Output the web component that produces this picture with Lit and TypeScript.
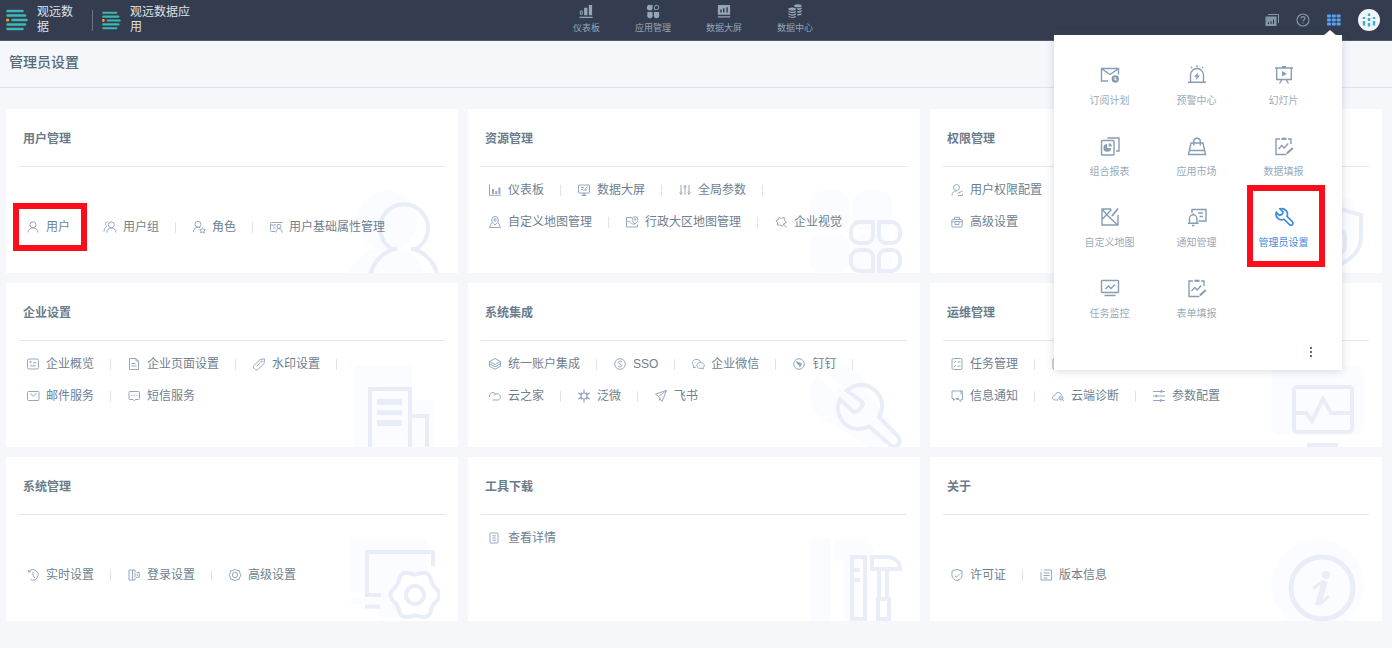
import { LitElement, html, css, svg, nothing } from "lit";
import { customElement, property } from "lit/decorators.js";

/* ---------- small line icons, 14 x 14 ---------- */
const small: Record<string, unknown> = {
  user: svg`<circle cx="7" cy="4.8" r="3"/><path d="M2 12.5c0-3 2.2-4.6 5-4.6s5 1.600 5 4.600"/>`,
  group: svg`<circle cx="8.300" cy="4.800" r="3"/><path d="M3.800 12.500c0-3 2-4.600 4.500-4.600s4.700 1.600 4.700 4.600M4.600 1.800C2.400 2 2 5 3.700 6.700 2 7.500 1 9.300 1 11.500"/>`,
  role: svg`<circle cx="6" cy="4.300" r="3"/><path d="M1.500 12c0-3 1.800-4.700 4.500-4.700 1 0 1.600.2 2.200.5"/><path d="m10.500 7.800.9 1.700 1.900.3-1.400 1.300.3 1.900-1.700-.9-1.700.9.3-1.900-1.400-1.300 1.900-.3z"/>`,
  attrs: svg`<path d="M6 11.500H2.500a1 1 0 0 1-1-1v-7a1 1 0 0 1 1-1h11M1.500 5H7M4 8h2.500"/><circle cx="10" cy="6.300" r="2"/><path d="M6.800 12.500c.2-2.500 1.400-4 3.200-4s3 1.500 3.200 4"/>`,
  bars: svg`<path d="M1.500 1.500v10.800h11.500"/><path stroke-width="2" d="M5 6v5M8.200 8v3M11.400 4.500V11"/>`,
  screen: svg`<rect x="1.500" y="2" width="11" height="8" rx=".5"/><path d="M4 4.500h3M4 6.500h2M6.500 8l4-4.500M9 8V6M4.500 12.500h5M7 10v2.500M5.500 11.300h3"/>`,
  sliders: svg`<path d="M3 2v6.500M7 5v7M11 2v6.500M3 11v1M7 2v1M11 11v1"/><circle cx="3" cy="9.700" r="1"/><circle cx="7" cy="3.900" r="1"/><circle cx="11" cy="9.700" r="1"/>`,
  mapPin: svg`<path d="M7 10C4.500 8 3.700 6.500 3.700 4.800a3.300 3.300 0 0 1 6.600 0C10.300 6.500 9.500 8 7 10z"/><circle cx="7" cy="4.800" r="1.200"/><path d="M3.700 7.500 1.500 12.500h11l-2.200-5"/>`,
  region: svg`<path d="M7 2.500H1.500v9.500h11V9.500M1.500 5.500c2 2 3 0 4 2s3 1.500 4.500 1.500"/><path d="M10 9C8 7.300 7.300 6.200 7.300 4.500a2.800 2.800 0 0 1 5.600 0C12.900 6.200 12 7.300 10 9z"/><circle cx="10.100" cy="4.500" r=".8"/>`,
  visual: svg`<path d="M5 2.500c2 1.300 3 1 5-.5l.5 3.500 2 2-2.500 1-1.500 2.500-2-1H3.500V7.500L2 5.500l2-.5zM9.500 9l3 3.500"/>`,
  permit: svg`<circle cx="6.500" cy="4.500" r="3"/><path d="M2 12.500c0-3 2-4.600 4.500-4.600M7.500 10.500l5-2.500M8 12.500h4.500V11"/>`,
  lockbox: svg`<rect x="1.800" y="4.500" width="10.400" height="7.500" rx="1"/><path d="M4.500 4.500V2.300h5v2.200M1.800 6.700h3M9.200 6.700h3"/><rect x="5" y="6.500" width="4" height="3"/>`,
  overview: svg`<rect x="1.500" y="2" width="11" height="10" rx="1.500"/><circle cx="4.500" cy="5" r=".8"/><path d="M4 8.800h6M7 5.800h3.500"/>`,
  page: svg`<path d="M9 1.500H2.500v11h9V4zM9 1.500V4h2.500M4.500 6.500h4M4.500 9h5"/>`,
  tag: svg`<path d="m2 8.500 6-6 4.500-.5-.5 4.500-6 6c-1 1-2.500.500-3.400-.500S1 9.500 2 8.500zM4.500 9.500l4-4"/><circle cx="9.700" cy="4.500" r=".6"/>`,
  mail: svg`<rect x="1.500" y="2.500" width="11.500" height="9" rx=".8"/><path d="m4 4.500 3.200 2.700L10.500 4.500"/>`,
  sms: svg`<path d="M3 2.500h8.500a1 1 0 0 1 1 1v6a1 1 0 0 1-1 1H8.500l-1.200 1.300L6 10.500H3a1 1 0 0 1-1-1v-6a1 1 0 0 1 1-1z"/><path d="M4.300 6.500h1M6.800 6.500h1M9.300 6.500h1"/>`,
  layers: svg`<path d="m7 1.500 5.500 3L7 7.500l-5.500-3zM1.500 6.800 7 9.800l5.500-3M1.500 9.200 7 12.300l5.500-3.100M1.500 4.500v5M12.500 4.500v5"/>`,
  sso: svg`<circle cx="7" cy="7" r="5.300"/><path d="M9 4.800C8 3.800 5.300 4 5.300 5.500S8.800 6.700 8.800 8.400 6 10.200 5 9.200"/>`,
  wechat: svg`<path d="M5 9.800 2.500 11l.4-2C.5 7 1 3 5 2.500c3-.300 4.500 1.300 4.800 2.800"/><path d="M9.500 5.500c2.200 0 3.800 1.300 3.800 3 0 1-.5 1.800-1.200 2.300l.2 1.200-1.300-.700c-3 .600-5.200-.8-5.200-2.800 0-1.700 1.500-3 3.700-3z"/><path d="M4 5.500h.6M8.300 8.200h.6M10.700 8.200h.6"/>`,
  ding: svg`<circle cx="7" cy="7" r="5.300"/><path d="m4 4 6 2.300c-.2 1-.8 1.700-1 2.200h.8L7.200 11l.5-1.800H6.600l.3-.9C5 7.500 4.300 6 4 4z" fill="currentColor" stroke="none"/>`,
  cloud: svg`<path d="M1.500 8C1.300 4.800 3.500 3.500 5 3.600c1.700.1 2.200 1.200 3 2.200M6 6.600c.8-1.900 3.500-2.600 5.300-.9 2 1.900 1 5-1.500 5.300H4.500"/>`,
  flower: svg`<circle cx="7" cy="7" r="3"/><path stroke-width="1.300" d="M7 4V.5M7 10v3.500M4.400 5.500 1.300 3.700M9.600 8.500l3.100 1.800M4.400 8.500l-3.100 1.800M9.600 5.500l3.100-1.800M4.500 3.500v2h-2M9.500 3.500v2h2M4.500 10.500v-2h-2M9.500 10.500v-2h2"/>`,
  plane: svg`<path d="M12.500 1.500 1.500 5l3 2.500 8-6-4.500 11L4.500 7.500M6 9l-.8 2.500"/>`,
  tasks: svg`<rect x="2" y="1.500" width="10" height="11" rx="1.500"/><path d="m3.800 4.800.8.800 1.200-1.500M7.500 5h3M3.800 9l.8.800L5.800 8.300M7.500 9.200h3M5 1.500v-.5M9 1.500v-.5"/>`,
  chat: svg`<path d="M3.500 9.500H2V2h9v3.500"/><path d="M10 2h2.500v8.500H11v2L8.800 10.500H6.500M3.500 9.500v2l2-2H9"/>`,
  cloudDiag: svg`<path d="M7 11H4C.5 10.500.8 6.800 3.800 6.500 4.500 3 9.500 2.500 10.500 6"/><circle cx="10" cy="9" r="2"/><path d="m11.300 10.500 1.500 1.500M9 9h2"/>`,
  params: svg`<path d="M1 2.500h12M1 7h12M1 11.500h12"/><path stroke-width="2.600" d="M8.500 2.500h1.800M3.500 7h1.800M7.800 11.500h1.800"/>`,
  history: svg`<path d="M3 3.300A5.200 5.200 0 1 1 4.500 11.500M2.200 1.800l.6 2.200 2.300-.3M7 4v3.500L9 10"/>`,
  login: svg`<path d="M8 4V2H2v10h6v-2M5.500 2v10M8 4.500v5M9.500 4.500h2.800v4.800L9 9.300M10.300 6v2"/>`,
  gear: svg`<path d="M7 1.200 9 2.500l2.300.2.500 2.200L13 7l-1.200 2.100-.5 2.200-2.300.2L7 12.800 5 11.500l-2.300-.2-.5-2.200L1 7l1.200-2.100.5-2.200L5 2.500z"/><ellipse cx="7" cy="7" rx="2.600" ry="2.800"/>`,
  list: svg`<rect x="2" y="2" width="8" height="10" rx=".8"/><path d="M4.300 4.800h3.500M4.300 7h3.500M4.300 9.300h3.500"/>`,
  shield: svg`<path d="M7 1.300 12 3v4.500c0 2.500-2.300 4.200-5 5.200-2.700-1-5-2.700-5-5.200V3z"/><path d="m4.700 7.500 1.800 1.700 3-3"/>`,
  version: svg`<path d="M2 2h1M5 2h7.500v10H2V4M4.500 5h6M4.500 7.500h6M4.500 10h4"/>`,
};

/* ---------- launcher icons, 20 x 20 ---------- */
const large: Record<string, unknown> = {
  subscribe: svg`<path d="M18.500 9.500V3.500h-17v12.500H8M2 4l8 5.500L18 4"/><circle cx="15.300" cy="14" r="3.700" fill="currentColor" stroke="none"/><path stroke="#fff" stroke-width="1.200" d="M15 12v2.300l1.500 1"/>`,
  alarm: svg`<path d="M1 17.300h18M3.500 17V10a6.500 6.500 0 0 1 13 0v7M10 .3v2M4 1.800l1 1.400M16 1.800l-1 1.400"/><path fill="currentColor" stroke="none" d="m11 7.500-4 4.300h2.400L9 15l4-4.500h-2.500z"/>`,
  slides: svg`<path d="M1 3h18M2.700 3v11.500h14.600V3M8 14.500 5.500 18.500M12 14.500l2.500 4M8 1.800h4"/><path fill="currentColor" stroke="none" d="m8 6 5 2.800L8 11.500z"/>`,
  report: svg`<path d="M7.500 2h11.500v13h-3"/><rect x="1.500" y="4.500" width="12.500" height="14.500" rx=".8"/><path fill="currentColor" stroke="none" d="M7.200 8v4h4a3.900 3.900 0 1 1-4-4z"/><path fill="currentColor" stroke="none" d="M8.700 7.200a3.400 3.400 0 0 1 3.200 3.200H8.700z"/>`,
  market: svg`<path d="M4 7h12l2.500 11.500h-17zM1.800 14.500h16.400M6.700 9.500V5.500a3.300 3.300 0 0 1 6.600 0v4"/>`,
  fill: svg`<path d="M6 3H2v15.500h10.500M14 3h3v5"/><path stroke-width="2.200" d="M7.500 2.800h5"/><path d="m4.500 13 3.300-3.500 2.400 2.500 4-4.500"/><path stroke-width="2" d="m12.800 17.500 6-5.500"/>`,
  map: svg`<path d="M11 2H2v16h16V8M2 12.500 11.500 2.500M7 8l10.500 10M2.500 2.500 7 8"/><path stroke-width="1.800" d="m12 9 6-7.500"/>`,
  notice: svg`<path d="M5 6V2.500h14V14h-7.500M11 6h5M12.500 9.500H16"/><path d="M2.500 16v-4.500a3.700 3.700 0 0 1 7.400 0V16M.8 16.300h10.800M6.200 7.500v-1M5 18.500h2.500"/>`,
  wrench: svg`<path d="M6 1.900a5.600 5.600 0 0 1 7 7.500l5.300 5.300c1.700 2-.8 4.600-2.800 2.900L10 12.200A5.600 5.600 0 0 1 2.300 5.300L5.200 8.200l2.300-.5L8.700 6.500 9 4.800z"/>`,
  monitor: svg`<rect x="1.500" y="2.500" width="17" height="12" rx=".8"/><path d="m5.500 11 3-3 2.500 2.500L15 6.500M4.500 17.500h11"/>`,
};

/* wavy outline of the cog in the corner artwork */
const cogPath = (cx: number, cy: number, r: number, depth: number): string => {
  const pts: string[] = [];
  for (let a = 0; a < 360; a += 5) {
    const t = (a * Math.PI) / 180;
    const d = r + depth * Math.cos(6 * t);
    pts.push(`${(cx + d * Math.cos(t)).toFixed(1)} ${(cy + d * Math.sin(t)).toFixed(1)}`);
  }
  return `M${pts.join("L")}Z`;
};

/* ---------- corner artwork, 92 x 82: "p" is the pale shade, "b" a solid part ---------- */
const art: Record<string, unknown> = {
  user: svg`<circle class="p" cx="39" cy="30" r="30"/><circle class="p" cx="39" cy="98" r="42"/>
    <path d="M45 58.500a24 24 0 1 1 22 0M22.500 83a34 34 0 0 1 22.500-24.500M67 58.500A34 34 0 0 1 89 83M45 58.500a34 34 0 0 1 4-1M67 58.500a34 34 0 0 0-4-1"/>`,
  apps: svg`<rect class="p" width="39" height="39" rx="12"/><rect class="p" x="43" width="39" height="39" rx="12"/><rect class="p" y="43" width="39" height="39" rx="12"/><rect class="p" x="43" y="43" width="39" height="39" rx="12"/>
    <path d="M50 31h13v14a7 7 0 0 1-7 7h-7a8 8 0 0 1-8-8v-4a9 9 0 0 1 9-9zM82 31H69v14a7 7 0 0 0 7 7h6a8 8 0 0 0 8-8v-4a9 9 0 0 0-8-9zM50 80h13V66a7 7 0 0 0-7-7h-7a8 8 0 0 0-8 8v4a9 9 0 0 0 9 9zM82 80H69V66a7 7 0 0 1 7-7h6a8 8 0 0 1 8 8v4a9 9 0 0 1-8 9z"/>`,
  shield: svg`<path class="p" d="M6 12 45 0l39 10v34c0 18-16 30-39 38C22 74 6 62 6 44z"/><path d="M29 24 59 15l30 9v22c0 15-12 25-30 31-18-6-30-16-30-31z"/><path d="M68 40a5 5 0 0 1 5 5v11a5 5 0 0 1-5 5"/>`,
  building: svg`<path class="p" d="M6 0h58v35h22v47H6z"/><path d="M22 82V24h40v58M62 51h17v31"/><path class="b" d="M29 34h25v6H29zM29 45h25v5H29zM29 55h25v6H29z"/>`,
  wrench: svg`<circle class="p" cx="29" cy="30" r="29"/><path class="p" d="M12 53 52 20l34 46-14 16H60z"/><path class="cut" d="M8 5l19 19"/>
    <path d="M37 25.500A21 21 0 0 1 69 52l19 19.500c5 6-2 13-8 8L59 61.500A21 21 0 0 1 30 34l12 11.500c2 2 4 2 6 0l3.500-3.500c2-2 1.500-4 0-5.500z"/>`,
  monitor: svg`<rect class="p" width="92" height="70" rx="8"/><rect x="22" y="22" width="58" height="45" rx="3"/><path d="M22 48h12l6 8 11-22 8 14h21"/><path class="b" d="M35 78h31v4H35z"/>`,
  cog: svg`<path class="p" d="M3 0h76v53H3zM3 59h20v6H3z"/><path class="p" d="${cogPath(46, 56, 24, 2)}"/><path d="M33 56H19V13h66v14M17 67.500h15"/><path class="w" d="${cogPath(67, 56, 22.5, 2)}"/><circle cx="67" cy="56" r="9"/>`,
  tools: svg`<path class="p" d="M0 0h21v82H0zM25 0h22c12 0 19 10 19 22H50v60H34V22h-9z"/><path d="M42 18h13v62H42zM42 31h8M42 41h8M62 18h14c9 0 14 5 14 12H62zM69 30v28M77 30v28M68 60h11v20H68z"/>`,
  info: svg`<circle class="p" cx="46" cy="46" r="46"/><circle stroke-width="5" class="ring" cx="50" cy="49" r="31"/><circle class="b" cx="54" cy="36" r="4"/><path class="thin" d="M42.500 49c3-3.500 7-5.500 9-5M44 64.500c3 1.500 8-2 12-7"/><path class="thick" d="M53 42l-6.500 22"/>`,
};

type Entry = { icon: string; label: string; marked?: boolean };
type Section = { title: string; art: string; centred?: boolean; rows: Entry[][] };
const e = (icon: string, label: string, marked = false): Entry => ({ icon, label, marked });

const sections: Section[] = [
  { title: "用户管理", art: "user", centred: true, rows: [[e("user", "用户", true), e("group", "用户组"), e("role", "角色"), e("attrs", "用户基础属性管理")]] },
  { title: "资源管理", art: "apps", rows: [[e("bars", "仪表板"), e("screen", "数据大屏"), e("sliders", "全局参数")], [e("mapPin", "自定义地图管理"), e("region", "行政大区地图管理"), e("visual", "企业视觉")]] },
  { title: "权限管理", art: "shield", rows: [[e("permit", "用户权限配置")], [e("lockbox", "高级设置")]] },
  { title: "企业设置", art: "building", rows: [[e("overview", "企业概览"), e("page", "企业页面设置"), e("tag", "水印设置")], [e("mail", "邮件服务"), e("sms", "短信服务")]] },
  { title: "系统集成", art: "wrench", rows: [[e("layers", "统一账户集成"), e("sso", "SSO"), e("wechat", "企业微信"), e("ding", "钉钉")], [e("cloud", "云之家"), e("flower", "泛微"), e("plane", "飞书")]] },
  { title: "运维管理", art: "monitor", rows: [[e("tasks", "任务管理"), e("tasks", "")], [e("chat", "信息通知"), e("cloudDiag", "云端诊断"), e("params", "参数配置")]] },
  { title: "系统管理", art: "cog", centred: true, rows: [[e("history", "实时设置"), e("login", "登录设置"), e("gear", "高级设置")]] },
  { title: "工具下载", art: "tools", rows: [[e("list", "查看详情")]] },
  { title: "关于", art: "info", centred: true, rows: [[e("shield", "许可证"), e("version", "版本信息")]] },
];

const launcher: Entry[] = [
  e("subscribe", "订阅计划"), e("alarm", "预警中心"), e("slides", "幻灯片"),
  e("report", "组合报表"), e("market", "应用市场"), e("fill", "数据填报"),
  e("map", "自定义地图"), e("notice", "通知管理"), e("wrench", "管理员设置", true),
  e("monitor", "任务监控"), e("fill", "表单填报"),
];

@customElement("setting-card")
class SettingCard extends LitElement {
  @property({ attribute: false }) section!: Section;

  static styles = css`
    :host { display: flex; flex-direction: column; position: relative; min-height: 164px; background: #fff; }
    .title { margin: 0; padding: 20px 17px 17px; font-size: 12px; line-height: 20px; font-weight: 700; color: #6a7b8b; }
    .body { flex: 1; display: flex; flex-direction: column; margin: 0 13px; padding: 7px 7px 0; border-top: 1px solid #e3e6ea; }
    .body.centred { justify-content: center; padding-top: 14px; }
    .row { display: flex; flex-wrap: wrap; position: relative; z-index: 1; }
    .cell { display: flex; align-items: center; height: 32px; }
    .sep { width: 1px; height: 11px; margin: 0 16px; background: #dfe3ec; }
    .link { display: flex; align-items: center; gap: 6px; height: 32px; position: relative; font-size: 12px; line-height: 20px; color: #6e7f90; text-decoration: none; white-space: nowrap; }
    .link.marked::after { content: ""; position: absolute; inset: -8px -17px -8px -13px; border: 6px solid #fc0d1b; }
    .icon { width: 14px; height: 14px; fill: none; stroke: currentColor; color: #94a9c0; stroke-linejoin: round; }
    .art { position: absolute; right: 18px; bottom: 0; width: 92px; height: 82px; fill: none; stroke: #e8edf8; stroke-width: 4; }
    .art .p { fill: #fafcff; stroke: none; }
    .art .b { fill: #e8edf8; stroke: none; }
    .art .w { fill: #fff; }
    .art .cut { stroke: #fff; stroke-width: 9; }
    .art .ring { stroke-width: 5; }
    .art .thin { stroke-width: 3; stroke-linecap: round; }
    .art .thick { stroke-width: 6; }
  `;

  render() {
    const { title, rows, centred } = this.section;
    const last = rows[rows.length - 1];
    return html`
      <svg class="art" viewBox="0 0 92 82" aria-hidden="true">${art[this.section.art]}</svg>
      <h2 class="title">${title}</h2>
      <div class="body ${centred ? "centred" : ""}">
        ${rows.map((row) => html`<div class="row">
          ${row.map((it, i) => html`<div class="cell">
            <a class="link ${it.marked ? "marked" : ""}" href="#">
              <svg class="icon" viewBox="0 0 14 14" aria-hidden="true">${small[it.icon]}</svg>${it.label}</a>
            ${row === last && i === row.length - 1 ? nothing : html`<span class="sep"></span>`}
          </div>`)}
        </div>`)}
      </div>`;
  }
}

@customElement("app-launcher")
class AppLauncher extends LitElement {
  static styles = css`
    :host { display: block; width: 288px; box-sizing: border-box; background: #fff; box-shadow: 0 1px 8px rgba(90, 110, 140, 0.25); }
    .arrow { position: absolute; top: -5px; right: 5px; width: 14px; height: 6px; fill: #fff; }
    .grid { display: grid; grid-template-columns: repeat(3, 1fr); grid-auto-rows: 71px; padding: 18px 15px 0 12px; }
    .tile { display: flex; flex-direction: column; align-items: center; gap: 8px; position: relative; padding-top: 12px; font-size: 10px; line-height: 16px; color: #9aabbb; text-decoration: none; }
    .tile.marked { color: #3f8ce0; }
    .tile.marked::after { content: ""; position: absolute; inset: -10px 2px -1px 7px; border: 6px solid #fc0d1b; }
    .icon { width: 20px; height: 20px; fill: none; stroke: currentColor; stroke-width: 1.4; color: #879db2; }
    .tile.marked .icon { color: #3f8ce0; stroke-width: 1.7; }
    .foot { display: flex; justify-content: flex-end; padding: 5px 23px 8px 0; }
    .more { display: grid; place-items: center; width: 16px; height: 20px; padding: 0; border: 0; background: none; }
    .dots { width: 2px; height: 10px; fill: #5c6f80; }
  `;

  render() {
    return html`
      <svg class="arrow" viewBox="0 0 14 6" aria-hidden="true"><path d="M0 6 7 0l7 6z" /></svg>
      <nav class="grid">
        ${launcher.map((it) => html`<a class="tile ${it.marked ? "marked" : ""}" href="#">
          <svg class="icon" viewBox="0 0 20 20" aria-hidden="true">${large[it.icon]}</svg>${it.label}</a>`)}
      </nav>
      <div class="foot">
        <button class="more" type="button">
          <svg class="dots" viewBox="0 0 2 10" aria-hidden="true"><path d="M0 0h2v2H0zM0 4h2v2H0zM0 8h2v2H0z" /></svg>
        </button>
      </div>`;
  }
}

const brandMark = svg`
  <g stroke="#3fb8b4" stroke-width="2.500" stroke-linecap="round"><path d="M1.500 1.500h15M1.500 6h17.500M6.500 10.500h14M1.500 15h17.500M1.500 19.500h15"/></g>
  <circle cx="1.600" cy="10.500" r="1.600" fill="#f5a623"/>`;

const topNav = [
  { label: "仪表板", icon: svg`<path d="M1 14.500h14v1.500H1zM11 2h3.500v11H11zM6 5h3.500v8H6z"/><path d="M2 8.500h2V12H2z" fill="none" stroke="currentColor"/>` },
  { label: "应用管理", icon: svg`<path d="M5 2h2.500v2.500a3 3 0 1 1-2.500-2.500zM2 9.500h5.500V12A3 3 0 1 1 2 12zM9 9.500h5.500V12A3 3 0 1 1 9 12z"/><path d="M9.500 7V4.500a2.300 2.300 0 1 1 2.500 2.500z" fill="none" stroke="currentColor"/>` },
  { label: "数据大屏", icon: svg`<path fill-rule="evenodd" d="M1.500 2h13v10.500h-13zM4 7v3h1.500V7zM7 5.500V10h1.500V5.500zM10.500 4.500V10H12V4.500zM1.500 14h13v1.500h-13z"/>` },
  { label: "数据中心", icon: svg`<ellipse cx="11" cy="3" rx="4" ry="1.600"/><path d="M9.500 5.500c2 .500 4.500 0 5.500-1V6c-.5 1-2.500 1.500-4 1.300zM10.500 8.500c2 .3 3.500-.200 4.500-1V9c-.500 1-2.500 1.400-4.500 1.200zM10.500 11.500c2 .2 3.500-.200 4.500-1V12c-.500 1-2.500 1.400-4.500 1.200z"/><ellipse cx="5" cy="6.500" rx="4" ry="1.600"/><path d="M1 8.200c2 1.600 6 1.600 8 0v1.400c-1 1.700-7 1.700-8 0zM1 11c2 1.600 6 1.600 8 0v1.300c-1 1.700-7 1.700-8 0zM1 13.600c2 1.600 6 1.600 8 0v1c-1 1.700-7 1.700-8 0z"/>` },
];

@customElement("app-root")
class AppRoot extends LitElement {
  static styles = css`
    :host { display: block; min-height: 100vh; background: #f5f7fb; font-family: "Liberation Sans", "Noto Sans CJK SC", sans-serif; }
    .bar { display: grid; grid-template-columns: 1fr auto 1fr; align-items: center; position: relative; z-index: 5; box-sizing: border-box; height: 41px; padding: 0 12px 0 6px; background: #343c4f; border-bottom: 1px solid #505a6c; }
    .brands, .tools { display: flex; align-items: center; }
    .brand { font-size: 12px; line-height: 15px; color: #dde2e9; text-decoration: none; display: flex; align-items: center; gap: 9px; }
    .name { width: 36px; }
    .name.wide { width: 60px; }
    .mark { width: 22px; height: 22px; }
    .mark.second { width: 19px; height: 19px; }
    .rule { width: 1px; height: 21px; margin: 0 9px 0 19px; background: #6a7485; }
    .nav { display: flex; gap: 35px; }
    .tab { display: flex; flex-direction: column; align-items: center; gap: 1px; font-size: 9px; line-height: 14px; color: #93a6b9; text-decoration: none; }
    .tab svg { width: 16px; height: 16px; padding-bottom: 1px; margin-top: -3px; fill: currentColor; }
    .tools { justify-content: flex-end; color: #8495a8; }
    .tool { display: grid; padding: 0; border: 0; background: none; color: inherit; }
    .tool svg { width: 14px; height: 14px; }
    .tool + .tool { margin-left: 17px; }
    .tool.on { color: #57a0f5; }
    .tool.avatar svg { width: 22px; height: 22px; }
    .launcher { position: absolute; top: 35px; right: 50px; }
    .heading { display: flex; align-items: center; height: 42px; padding: 0 9px 4px; border-bottom: 1px solid #e0e4ea; margin: 0; font-size: 14px; line-height: 20px; font-weight: 500; color: #566979; }
    .cards { display: grid; grid-template-columns: repeat(3, 1fr); gap: 10px; padding: 21px 10px 20px 6px; }
  `;

  render() {
    return html`
      <header class="bar">
        <div class="brands">
          <a class="brand" href="#"><svg class="mark" viewBox="0 0 22 21" aria-hidden="true">${brandMark}</svg><span class="name">观远数据</span></a>
          <span class="rule"></span>
          <a class="brand" href="#"><svg class="mark second" viewBox="0 0 22 21" aria-hidden="true">${brandMark}</svg><span class="name wide">观远数据应用</span></a>
        </div>
        <nav class="nav">
          ${topNav.map((t) => html`<a class="tab" href="#"><svg viewBox="0 0 16 17" aria-hidden="true">${t.icon}</svg>${t.label}</a>`)}
        </nav>
        <div class="tools">
          <button class="tool" type="button"><svg viewBox="0 0 14 14" aria-hidden="true"><path fill="currentColor" fill-rule="evenodd" d="M.500 3.500h11V13H.500zM3 9v2h1V9zM5.500 8v3h1V8zM8 6.500V11h1V6.500z"/><path fill="none" stroke="currentColor" d="M3 1.500h10.500V10"/></svg></button>
          <button class="tool" type="button"><svg viewBox="0 0 14 14" fill="none" stroke="currentColor" stroke-width="1.200" aria-hidden="true"><circle cx="7" cy="7" r="6"/><path d="M5 5.600C5 4.300 5.900 3.700 7 3.700s2 .7 2 1.700c0 1.400-2 1.400-2 2.900M7 9.400v1.200"/></svg></button>
          <button class="tool on" type="button"><svg viewBox="0 0 14 14" fill="currentColor" aria-hidden="true">
            ${[0, 4.8, 9.6].map((x) => [1.5, 5.5, 9.5].map((y) => svg`<rect x=${x} y=${y} width="4" height="3" rx=".8"/>`))}
          </svg></button>
          <button class="tool avatar" type="button"><svg viewBox="0 0 22 22" aria-hidden="true"><circle cx="11" cy="11" r="11" fill="#f2f4f6"/><g stroke="#35b0d8" stroke-width="2.400"><path d="M6 8v2M11 4.500v2.500M16 8v2M6 12v4.500M11 9v3M16 12v4.500M11 14v3.500"/></g></svg></button>
        </div>
        <app-launcher class="launcher"></app-launcher>
      </header>
      <h1 class="heading">管理员设置</h1>
      <main class="cards">
        ${sections.map((s) => html`<setting-card .section=${s}></setting-card>`)}
      </main>`;
  }
}
